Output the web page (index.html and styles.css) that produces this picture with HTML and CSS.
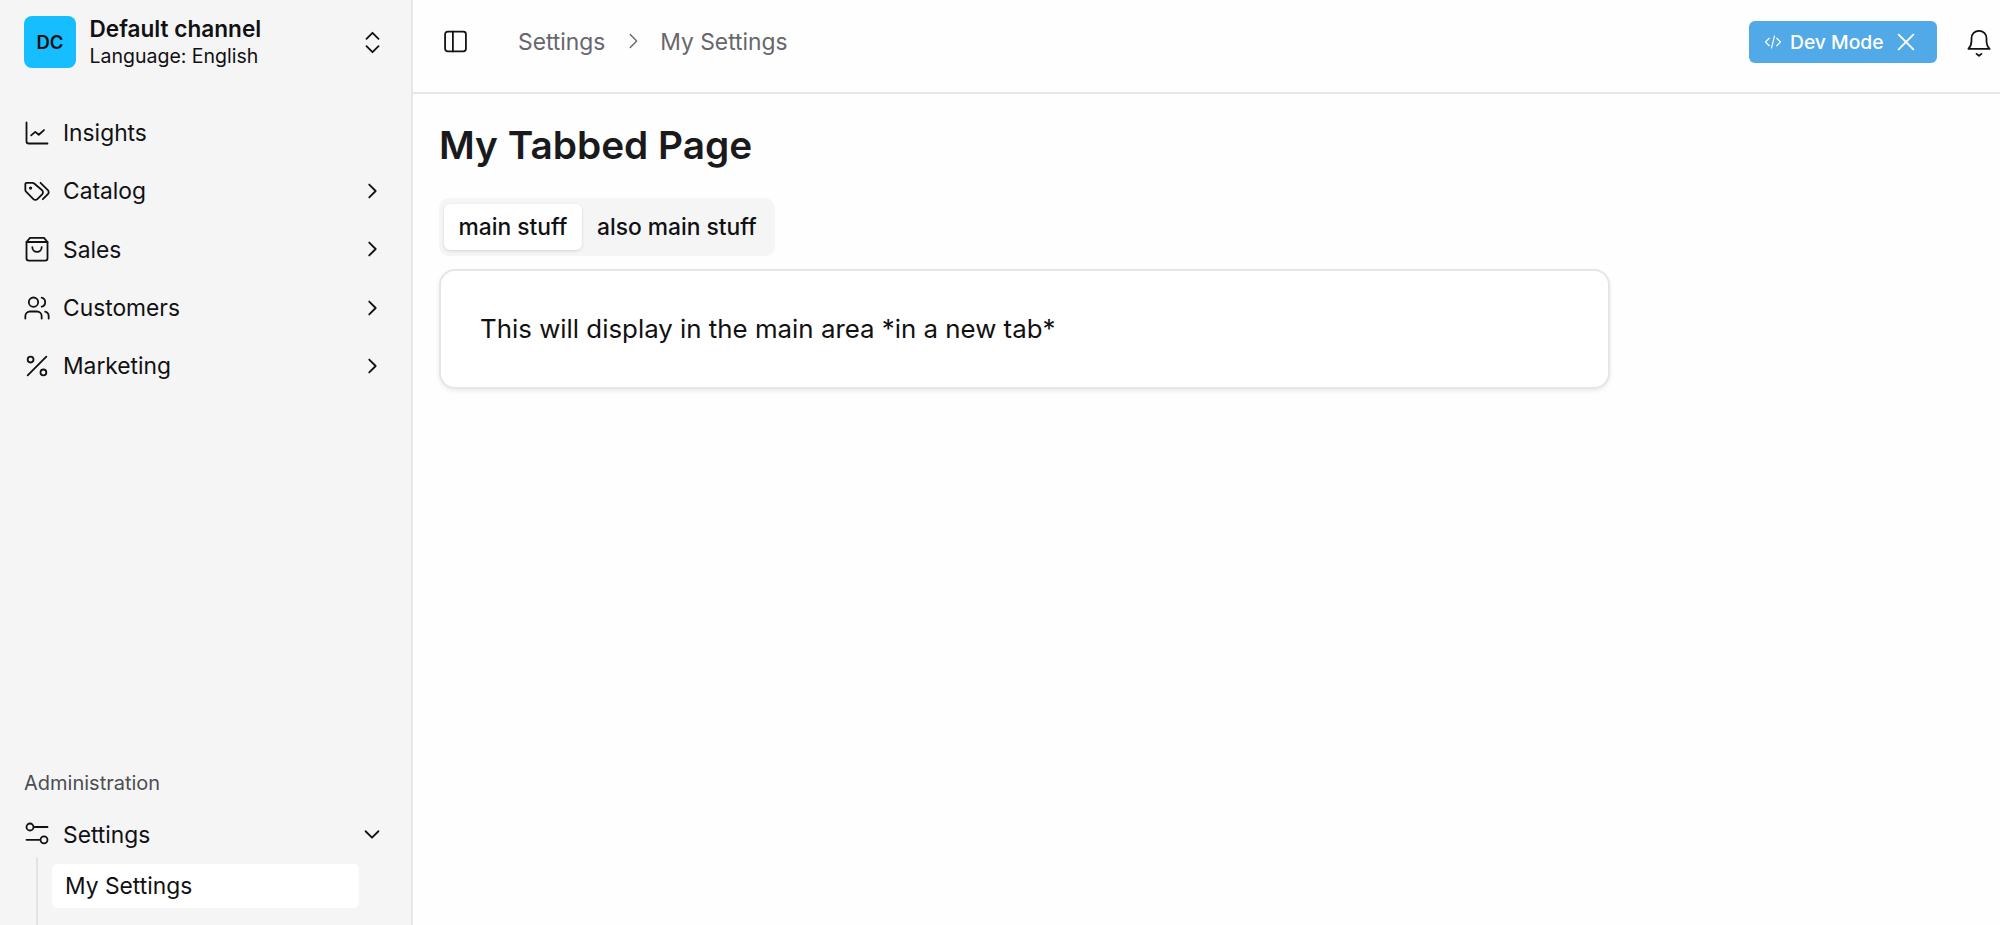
FILE: index.html
```html
<!DOCTYPE html>
<html lang="en">
<head>
<meta charset="utf-8">
<title>My Tabbed Page</title>
<link rel="stylesheet" href="styles.css">
</head>
<body>
<div class="app">
  <aside class="sidebar">
    <div class="channel">
      <div class="avatar">DC</div>
      <div class="channel-text">
        <div class="channel-name">Default channel</div>
        <div class="channel-lang">Language: English</div>
      </div>
      <svg class="ico chev-updown" viewBox="0 0 24 24"><path d="m7 15 5 5 5-5"/><path d="m7 9 5-5 5 5"/></svg>
    </div>
    <nav class="nav">
      <a class="nav-item">
        <svg class="ico" viewBox="0 0 24 24"><path d="M3 3v16a2 2 0 0 0 2 2h16"/><path d="m7 14 3.500-3 3 2.500L18 9.500"/></svg>
        <span class="nav-label">Insights</span>
      </a>
      <a class="nav-item">
        <svg class="ico" viewBox="0 0 24 24"><path d="m15 5 6.300 6.300a2.400 2.400 0 0 1 0 3.400L17 19"/><path d="M9.600 5.600A2 2 0 0 0 8.200 5H3a1 1 0 0 0-1 1v5.200a2 2 0 0 0 .6 1.400l6.300 6.300a2.400 2.400 0 0 0 3.400 0l4.100-4.100a2.400 2.400 0 0 0 0-3.400z"/><circle cx="6.500" cy="9.500" r=".6"/></svg>
        <span class="nav-label">Catalog</span>
        <svg class="ico chev" viewBox="0 0 24 24"><path d="m9 5 7 7-7 7"/></svg>
      </a>
      <a class="nav-item">
        <svg class="ico" viewBox="0 0 24 24"><path d="M6 2.500h12L21 6v14a2 2 0 0 1-2 2H5a2 2 0 0 1-2-2V6z"/><path d="M3 6h18"/><path d="M8 10.500a4 4 0 0 0 8 0"/></svg>
        <span class="nav-label">Sales</span>
        <svg class="ico chev" viewBox="0 0 24 24"><path d="m9 5 7 7-7 7"/></svg>
      </a>
      <a class="nav-item">
        <svg class="ico" viewBox="0 0 24 24"><path d="M16 21v-2a4 4 0 0 0-4-4H6a4 4 0 0 0-4 4v2"/><circle cx="9" cy="7" r="4"/><path d="M22 21v-2a4 4 0 0 0-3-3.870"/><path d="M16 3.130a4 4 0 0 1 0 7.750"/></svg>
        <span class="nav-label">Customers</span>
        <svg class="ico chev" viewBox="0 0 24 24"><path d="m9 5 7 7-7 7"/></svg>
      </a>
      <a class="nav-item">
        <svg class="ico" viewBox="0 0 24 24"><path d="M20 4 4 20"/><circle cx="6.500" cy="6.500" r="2.500"/><circle cx="17.500" cy="17.500" r="2.500"/></svg>
        <span class="nav-label">Marketing</span>
        <svg class="ico chev" viewBox="0 0 24 24"><path d="m9 5 7 7-7 7"/></svg>
      </a>
    </nav>
    <div class="admin">
      <div class="admin-title">Administration</div>
      <a class="nav-item">
        <svg class="ico" viewBox="0 0 24 24"><path d="M10 6h11"/><path d="M3 17h11"/><circle cx="6" cy="6" r="3"/><circle cx="18" cy="17" r="3"/></svg>
        <span class="nav-label">Settings</span>
        <svg class="ico chev" viewBox="0 0 24 24"><path d="m5 9 7 7 7-7"/></svg>
      </a>
      <div class="subnav">
        <a class="sub-item">My Settings</a>
      </div>
    </div>
  </aside>
  <div class="main">
    <header class="topbar">
      <svg class="ico panel" viewBox="0 0 24 24"><rect x="2" y="2.500" width="20" height="19" rx="2.500"/><path d="M9.500 2.500v19"/></svg>
      <div class="crumbs">
        <span>Settings</span>
        <svg class="ico crumb-sep" viewBox="0 0 24 24"><path d="m9 5 7 7-7 7"/></svg>
        <span>My Settings</span>
      </div>
      <div class="dev-mode">
        <svg class="ico code" viewBox="0 0 24 24"><path d="m7 7-5 5 5 5"/><path d="m17 7 5 5-5 5"/><path d="m14 4-4 16"/></svg>
        <span>Dev Mode</span>
        <svg class="ico close" viewBox="0 0 24 24"><path d="M4 4l16 16"/><path d="M20 4 4 20"/></svg>
      </div>
      <svg class="ico bell" viewBox="0 0 24 24"><path d="M3.500 17.500h17c-1.500-1.500-2.500-3-2.500-6.500V9a6 6 0 0 0-12 0v2c0 3.500-1 5-2.500 6.500z"/><path d="m10 21.500 2 1.500 2-1.500"/></svg>
    </header>
    <main class="content">
      <h1 class="page-title">My Tabbed Page</h1>
      <div class="tabs">
        <button class="tab tab-active">main stuff</button>
        <button class="tab">also main stuff</button>
      </div>
      <section class="card">This will display in the main area *in a new tab*</section>
    </main>
  </div>
</div>
</body>
</html>
```

FILE: styles.css
```css
* { box-sizing: border-box; }
html, body { margin: 0; height: 100%; overflow: hidden; }
body {
  font-family: Inter, "Liberation Sans", sans-serif;
  color: #111113;
  background: #fefefe;
}
.app { display: flex; height: 925px; }
.ico {
  fill: none;
  stroke: currentColor;
  stroke-width: 1.800;
  stroke-linecap: round;
  stroke-linejoin: round;
  flex: none;
  width: 24px;
  height: 24px;
}

/* Sidebar */
.sidebar {
  width: 413px;
  flex: none;
  background: #f5f5f5;
  border-right: 2px solid #e6e6e6;
  display: flex;
  flex-direction: column;
  overflow: hidden;
}
.channel {
  display: flex;
  align-items: center;
  height: 84px;
  padding: 16px 24px 16px 24px;
}
.avatar {
  width: 52px;
  height: 52px;
  border-radius: 8px;
  background: #16bdff;
  display: flex;
  align-items: center;
  justify-content: center;
  font-size: 18.500px;
  font-weight: 600;
  flex: none;
}
.channel-text { margin-left: 13.500px; flex: 1; }
.channel-name { font-size: 22.600px; font-weight: 600; line-height: 28px; }
.channel-lang { font-size: 19.500px; line-height: 26px; }
.chev-updown { width: 29px; height: 29px; stroke-width: 1.500; }

.nav { display: flex; flex-direction: column; padding-top: 19.500px; flex: 1; }
.nav-item {
  display: flex;
  align-items: center;
  height: 58.300px;
  padding: 0 27px 0 23px;
  font-size: 22.800px;
}
.nav-item .ico:first-child { width: 28px; height: 28px; stroke-width: 1.550; }
.nav-label { margin-left: 12px; flex: 1; }
.chev { width: 22px; height: 22px; stroke-width: 2; margin-right: 1px; }

.admin { display: flex; flex-direction: column; }
.admin-title {
  padding-left: 24px;
  font-size: 20px;
  line-height: 24px;
  color: #4d4d52;
  margin-bottom: 16px;
}
.admin .nav-item { height: 46px; }
.subnav {
  margin-left: 36px;
  padding: 7px 0 17px 14px;
  border-left: 2px solid #e4e4e4;
}
.sub-item {
  display: block;
  width: 307px;
  height: 44px;
  line-height: 44px;
  padding-left: 13px;
  background: #fff;
  border-radius: 5px;
  font-size: 22.800px;
}

/* Main */
.main { flex: 1; display: flex; flex-direction: column; min-width: 0; }
.topbar {
  height: 94px;
  flex: none;
  border-bottom: 2px solid #e6e6e6;
  display: flex;
  align-items: center;
  padding: 0 6px 8px 30px;
}
.panel { width: 25px; height: 25px; stroke-width: 1.700; margin-top: -1px; }
.crumbs {
  display: flex;
  align-items: center;
  margin-left: 50px;
  padding-bottom: 2px;
  font-size: 22.800px;
  color: #66666c;
  flex: 1;
}
.crumb-sep { width: 22px; height: 22px; margin: 0 16.500px; stroke-width: 1.500; }
.dev-mode {
  display: flex;
  align-items: center;
  width: 188px;
  height: 42px;
  padding-left: 15px;
  padding-bottom: 1px;
  background: #52a9e8;
  border-radius: 6px;
  color: #fff;
  font-size: 19.300px;
  font-weight: 500;
}
.code { width: 18px; height: 18px; margin-right: 8px; stroke-width: 1.500; }
.close { width: 22px; height: 22px; margin-left: 11px; stroke-width: 2.100; }
.bell { width: 30px; height: 30px; margin-left: 27px; stroke-width: 1.400; }

.content { padding: 21px 26px; display: flex; flex-direction: column; align-items: flex-start; }
.page-title {
  margin: 0;
  font-size: 38.800px;
  line-height: 60px;
  font-weight: 600;
  color: #1a1a1c;
}
.tabs {
  display: flex;
  margin-top: 23px;
  padding: 6px 4px 6px 5px;
  height: 58px;
  width: 336px;
  background: #f5f5f5;
  border-radius: 10px;
}
.tab {
  flex: none;
  border: 0;
  background: none;
  font: inherit;
  font-size: 22.800px;
  font-weight: 450;
  white-space: nowrap;
  color: #111113;
  padding: 0 15px 2px;
  border-radius: 6px;
}
.tab-active { background: #fff; box-shadow: 0 1px 3px rgba(0, 0, 0, .14); width: 138px; padding: 0 0 2px; }
.card {
  width: 1171px;
  height: 120px;
  margin-top: 13px;
  padding: 0 39px 2px;
  display: flex;
  align-items: center;
  font-size: 25.850px;
  background: #fff;
  border: 2px solid #e6e6e6;
  border-radius: 16px;
  box-shadow: 0 2px 4px rgba(0, 0, 0, .08);
}
```
